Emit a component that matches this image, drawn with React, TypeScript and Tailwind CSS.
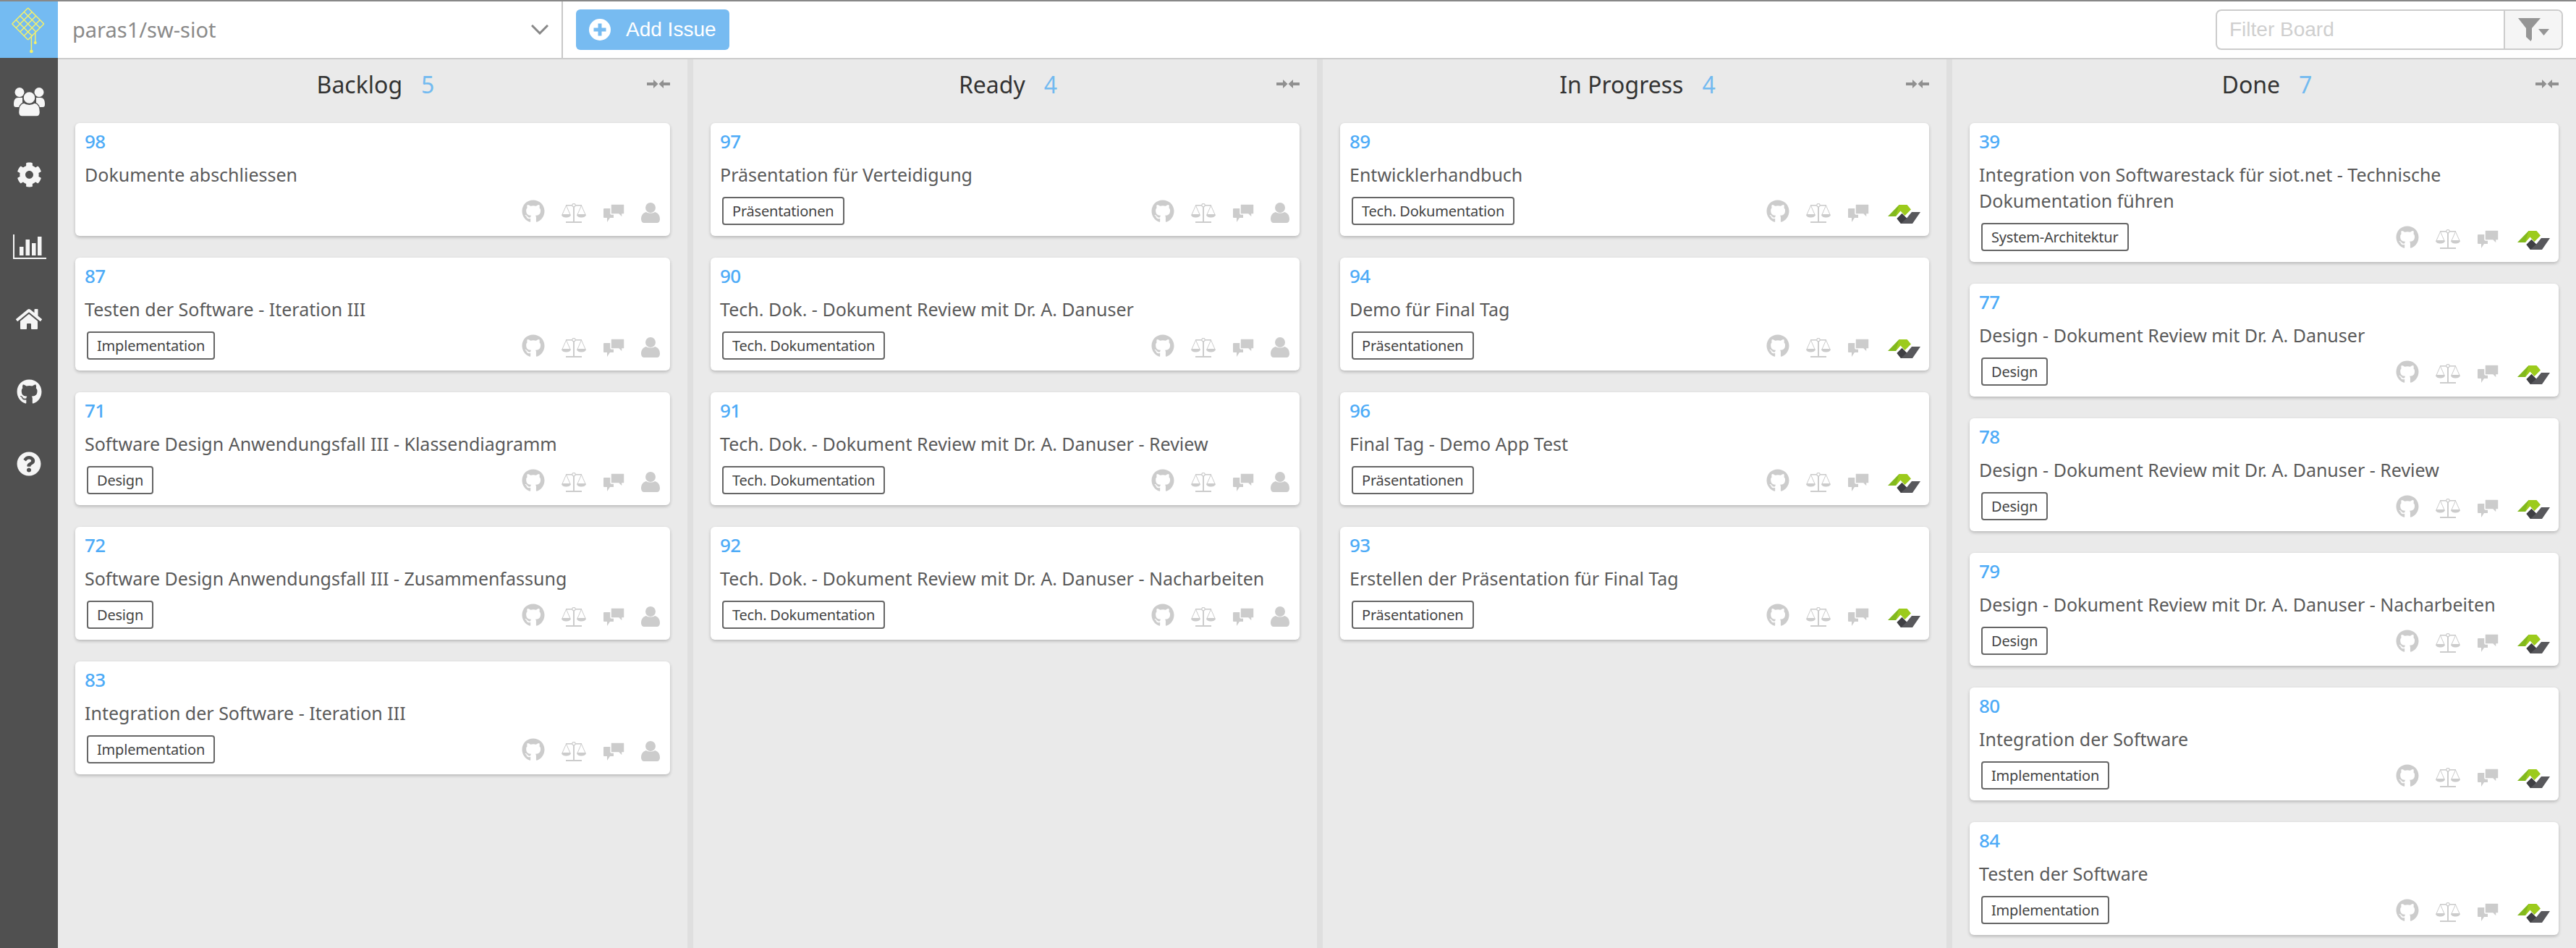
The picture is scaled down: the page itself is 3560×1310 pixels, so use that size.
import { FaCog, FaGithub, FaHome, FaQuestionCircle } from 'react-icons/fa'

type Issue = { id: number; title: string; tag?: string }

const columns: { name: string; done: boolean; issues: Issue[] }[] = [
  {
    name: 'Backlog',
    done: false,
    issues: [
      { id: 98, title: 'Dokumente abschliessen' },
      { id: 87, title: 'Testen der Software - Iteration III', tag: 'Implementation' },
      { id: 71, title: 'Software Design Anwendungsfall III - Klassendiagramm', tag: 'Design' },
      { id: 72, title: 'Software Design Anwendungsfall III - Zusammenfassung', tag: 'Design' },
      { id: 83, title: 'Integration der Software - Iteration III', tag: 'Implementation' },
    ],
  },
  {
    name: 'Ready',
    done: false,
    issues: [
      { id: 97, title: 'Präsentation für Verteidigung', tag: 'Präsentationen' },
      { id: 90, title: 'Tech. Dok. - Dokument Review mit Dr. A. Danuser', tag: 'Tech. Dokumentation' },
      { id: 91, title: 'Tech. Dok. - Dokument Review mit Dr. A. Danuser - Review', tag: 'Tech. Dokumentation' },
      { id: 92, title: 'Tech. Dok. - Dokument Review mit Dr. A. Danuser - Nacharbeiten', tag: 'Tech. Dokumentation' },
    ],
  },
  {
    name: 'In Progress',
    done: true,
    issues: [
      { id: 89, title: 'Entwicklerhandbuch', tag: 'Tech. Dokumentation' },
      { id: 94, title: 'Demo für Final Tag', tag: 'Präsentationen' },
      { id: 96, title: 'Final Tag - Demo App Test', tag: 'Präsentationen' },
      { id: 93, title: 'Erstellen der Präsentation für Final Tag', tag: 'Präsentationen' },
    ],
  },
  {
    name: 'Done',
    done: true,
    issues: [
      { id: 39, title: 'Integration von Softwarestack für siot.net - Technische Dokumentation führen', tag: 'System-Architektur' },
      { id: 77, title: 'Design - Dokument Review mit Dr. A. Danuser', tag: 'Design' },
      { id: 78, title: 'Design - Dokument Review mit Dr. A. Danuser - Review', tag: 'Design' },
      { id: 79, title: 'Design - Dokument Review mit Dr. A. Danuser - Nacharbeiten', tag: 'Design' },
      { id: 80, title: 'Integration der Software', tag: 'Implementation' },
      { id: 84, title: 'Testen der Software', tag: 'Implementation' },
    ],
  },
]

const counts = [5, 4, 4, 7]

function KiteLogo() {
  const lines = []
  for (let i = 0; i <= 4; i++) {
    const dx = i * 5.5
    lines.push(<line key={`a${i}`} x1={38.7 - 22 + dx} y1={33 + dx} x2={38.7 + dx} y2={10 + dx + 1} />)
    lines.push(<line key={`b${i}`} x1={38.7 - dx} y1={10 + dx + 1} x2={38.7 + 22 - dx} y2={33 + dx} />)
  }
  return (
    <svg width="80" height="78" viewBox="0 2 80 78" stroke="#f6f169" strokeWidth="1.5" fill="#f6f169">
      {lines}
      <line x1="43.4" y1="50" x2="43.4" y2="71" />
      <line x1="48.8" y1="45" x2="48.8" y2="59" />
      <circle cx="43.4" cy="71" r="1.6" />
      <circle cx="48.8" cy="59" r="1.2" />
    </svg>
  )
}

function UsersIcon() {
  return (
    <svg width="43" height="40" viewBox="0 0 43 40" fill="#f5f5f5">
      <circle cx="8" cy="6.500" r="6.500" />
      <circle cx="35" cy="6.500" r="6.500" />
      <path d="M0 23c0-6 2-9 6-9h6v13H3c-2 0-3-1-3-4zM43 23c0-6-2-9-6-9h-6v13h9c2 0 3-1 3-4z" />
      <circle cx="21.500" cy="14" r="8.500" stroke="#505050" strokeWidth="1.500" />
      <path d="M6.500 34c0-7 3-12 7.500-13 4 3 11 3 15 0 4.500 1 7.500 6 7.500 13 0 4-2 6-5 6H11.500c-3 0-5-2-5-6z" stroke="#505050" strokeWidth="1.500" />
    </svg>
  )
}

function ChartIcon() {
  return (
    <svg width="46" height="34" viewBox="0 0 46 34" fill="#f5f5f5">
      <path d="M0 0h2v32h44v2H0z" />
      <rect x="9" y="17" width="5.500" height="12" />
      <rect x="17.500" y="7" width="5.500" height="22" />
      <rect x="26" y="12" width="5.500" height="17" />
      <rect x="34" y="3" width="5.500" height="26" />
    </svg>
  )
}

function ScaleIcon() {
  return (
    <svg width="34" height="27" viewBox="0 0 34 27" fill="#cccccc" className="shrink-0">
      <rect x="16" y="3" width="2" height="22" />
      <rect x="6" y="2" width="22" height="1.600" />
      <circle cx="17" cy="2.600" r="2.200" fill="#ffffff" stroke="#cccccc" strokeWidth="1.200" />
      <rect x="6" y="25" width="22" height="2" />
      <path d="M6.500 3L1 15.500h11z M27.500 3L22 15.500h11z" fill="none" stroke="#cccccc" strokeWidth="1" />
      <path d="M0 15.500h13c0 2.500-3 4-6.500 4S0 18 0 15.500zM21 15.500h13c0 2.500-3 4-6.500 4s-6.500-1.500-6.500-4z" />
    </svg>
  )
}

function CommentsIcon() {
  return (
    <svg width="29" height="25" viewBox="0 0 29 25" fill="#cccccc" className="shrink-0 mb-[1px]">
      <path d="M1 6h13v13H9l-4 6v-6H1a1 1 0 0 1-1-1V7a1 1 0 0 1 1-1z" />
      <path
        d="M11 0h17a1 1 0 0 1 1 1v12a1 1 0 0 1-1 1h-2v5l-5-5h-10a1 1 0 0 1-1-1V1a1 1 0 0 1 1-1z"
        stroke="#ffffff"
        strokeWidth="1.500"
      />
    </svg>
  )
}

function UserIcon() {
  return (
    <svg width="26" height="28" viewBox="0 0 26 28" fill="#cccccc" className="shrink-0 mr-[14px]">
      <circle cx="13" cy="7" r="7" />
      <path d="M0 23c0-6 3-9 7-10 3 2 9 2 12 0 4 1 7 4 7 10 0 3-2 5-4 5H4c-2 0-4-2-4-5z" />
    </svg>
  )
}

function ZenhubLogo() {
  return (
    <svg width="46" height="26" viewBox="0 0 46 26" className="shrink-0 ml-[3px] mr-[11px] -mb-[1px]">
      <path d="M0 16L15.500 0h3l-2 8.500L11 16z" fill="#82b91e" />
      <path d="M15.500 0h11l5.500 6.500-8.500 8.500-6-6.500L11 16z" fill="#9ccb1c" />
      <path d="M12.500 19l7-7 6.500 6.500 7-8.500h12L34 26H18z" fill="#58585c" />
      <path d="M12.500 19l7-7 6.500 6.500L18 26z" fill="#3f3f43" />
    </svg>
  )
}

function CompressIcon() {
  return (
    <svg width="32" height="12" viewBox="0 0 32 12" fill="#909090">
      <path d="M0 4h9V0l6.500 6L9 12V8H0z" />
      <path d="M32 4h-9V0l-6.500 6 6.500 6V8h9z" />
    </svg>
  )
}

function FilterIcon() {
  return (
    <svg width="43" height="32" viewBox="0 0 43 32" fill="#959595">
      <path d="M0 0h31L19 14v15l-1.500 3L11 26V14z" />
      <path d="M28 15h15l-7.500 9z" />
    </svg>
  )
}

function Card({ issue, done }: { issue: Issue; done: boolean }) {
  return (
    <div className="flex flex-col rounded-md bg-white pl-[13px] pt-[9px] pb-[15px] shadow-[0_2px_4px_rgba(0,0,0,0.22)]">
      <div className="h-[33px] text-[26px] leading-[33px] font-medium tracking-[-0.5px] text-[#4dabf7]">{issue.id}</div>
      <div className="mt-[11px] pr-[30px] text-[25px] leading-[36px] text-[#5a5a5a]">{issue.title}</div>
      <div className="mt-[13px] flex h-[39px] items-end justify-between">
        {issue.tag ? (
          <span className="ml-[3px] flex h-[39px] items-center rounded-[4px] border-2 border-[#666666] px-[12px] text-[20px] tracking-[-0.2px] text-[#444444]">
            {issue.tag}
          </span>
        ) : (
          <span />
        )}
        <div className="flex items-end gap-[23.500px] pb-[3px]">
          <FaGithub className="shrink-0 text-[32px] text-[#cccccc]" />
          <ScaleIcon />
          <CommentsIcon />
          {done ? <ZenhubLogo /> : <UserIcon />}
        </div>
      </div>
    </div>
  )
}

export default function App() {
  return (
    <div className="flex h-[1310px] w-[3560px] overflow-hidden border-t-2 border-[#888888] bg-[#eaeaea] font-['Noto_Sans',sans-serif]">
      <aside className="flex w-20 shrink-0 flex-col">
        <div className="h-[78px] bg-[#74bbf2]">
          <KiteLogo />
        </div>
        <nav className="flex flex-1 flex-col items-center bg-[#505050] pt-[11px] text-[#f5f5f5]">
          <div className="flex h-[100px] items-center"><UsersIcon /></div>
          <div className="flex h-[100px] items-center"><FaCog className="text-[35px]" /></div>
          <div className="flex h-[100px] items-center pl-[2px]"><ChartIcon /></div>
          <div className="flex h-[100px] items-center"><FaHome className="text-[36px]" /></div>
          <div className="flex h-[100px] items-center"><FaGithub className="text-[35px]" /></div>
          <div className="flex h-[100px] items-center"><FaQuestionCircle className="text-[34px]" /></div>
        </nav>
      </aside>

      <main className="flex min-w-0 flex-1 flex-col">
        <header className="flex h-[80px] shrink-0 items-stretch border-b-2 border-[#cccccc] bg-white">
          <div className="flex w-[698px] items-center justify-between border-r-2 border-[#c8c8c8] pl-[20px] pr-[18px]">
            <span className="text-[29px] text-[#8a8a8a]">paras1/sw-siot</span>
            <svg width="24" height="14" viewBox="0 0 24 14" fill="none" stroke="#888888" strokeWidth="3">
              <path d="M1 1l11 11L23 1" />
            </svg>
          </div>
          <div className="flex flex-1 items-center justify-between pl-[18px] pr-[18px]">
            <button className="flex h-[56px] w-[212px] items-center rounded-md bg-[#77bbf1] pl-[18px] font-['Liberation_Sans',sans-serif] text-[28px] text-white">
              <svg width="30" height="30" viewBox="0 0 30 30" className="mr-[21px] shrink-0">
                <circle cx="15" cy="15" r="15" fill="#ffffff" />
                <path d="M12.500 6.500h5v6h6v5h-6v6h-5v-6h-6v-5h6z" fill="#77bbf1" />
              </svg>
              Add Issue
            </button>
            <div className="flex h-[56px] w-[480px] items-stretch overflow-hidden rounded-lg border-2 border-[#cccccc] font-['Liberation_Sans',sans-serif]">
              <div className="flex flex-1 items-center pl-[17px] text-[28px] text-[#cfcfcf]">Filter Board</div>
              <div className="flex w-[80px] items-center justify-center border-l-2 border-[#cccccc] bg-[#f5f5f5]">
                <FilterIcon />
              </div>
            </div>
          </div>
        </header>

        <div className="grid min-h-0 flex-1 grid-cols-[878px_870px_870px_862px]">
          {columns.map((col, i) => (
            <section
              key={col.name}
              className={
                i < 3
                  ? 'overflow-hidden border-r-8 border-[#dfdfdf] px-6'
                  : 'overflow-hidden px-6'
              }
            >
              <div className="flex h-[70px] items-center">
                <div className="flex flex-1 items-center justify-center gap-[26px] pl-[40px] text-[32px] text-[#333333]">
                  <span>{col.name}</span>
                  <span className="text-[#72baf0]">{counts[i]}</span>
                </div>
                <div className="pb-[3px]"><CompressIcon /></div>
              </div>
              <div className="mt-[18px] flex flex-col gap-[30px]">
                {col.issues.map((issue) => (
                  <Card key={issue.id} issue={issue} done={col.done} />
                ))}
              </div>
            </section>
          ))}
        </div>
      </main>
    </div>
  )
}
